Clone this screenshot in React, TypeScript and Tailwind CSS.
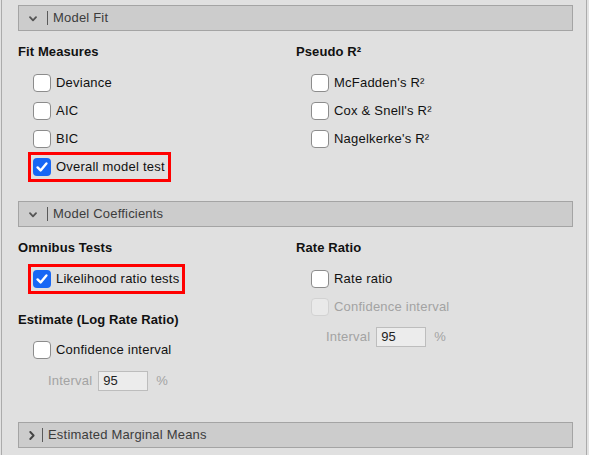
import React from 'react';

const font = { fontFamily: '"Liberation Sans", Arial, sans-serif' };

function SectionHeader({ title, open }: { title: string; open: boolean }) {
  return (
    <div className="flex h-[26px] items-center border border-[#a4a4a4] bg-[#cccccc] pl-[10px]">
      {open ? (
        <svg width="8" height="6" viewBox="0 0 8 6" className="mt-[2px]">
          <path d="M1 1.2 L4 4.4 L7 1.2" fill="none" stroke="#555" strokeWidth="1.8" strokeLinecap="round" strokeLinejoin="round" />
        </svg>
      ) : (
        <svg width="6" height="9" viewBox="0 0 6 9">
          <path d="M1.3 1 L4.6 4.5 L1.3 8" fill="none" stroke="#444" strokeWidth="1.9" strokeLinecap="round" strokeLinejoin="round" />
        </svg>
      )}
      <div className={`h-[14px] w-px bg-[#5a5a5a] ${open ? 'ml-[10px]' : 'ml-[7px]'}`} />
      <span className="ml-[5px] text-[13px] tracking-[0.2px] text-[#3c3c3c]">{title}</span>
    </div>
  );
}

function Check({
  label,
  checked = false,
  disabled = false,
  marked = false,
}: {
  label: string;
  checked?: boolean;
  disabled?: boolean;
  marked?: boolean;
}) {
  return (
    <div className="flex h-[28px] items-center pl-[15px]">
      <span
        className={`flex items-center gap-[5px] ${marked ? 'outline-[3px] outline-solid outline-[#ff0000] outline-offset-2 pr-[1px]' : ''}`}
      >
        {checked ? (
          <span className="flex h-[18px] w-[18px] items-center justify-center rounded-[4px] bg-[#1767f5]">
            <svg width="12" height="10" viewBox="0 0 12 10">
              <path d="M1.6 5.4 L4.6 8.4 L10.4 1.4" fill="none" stroke="#fff" strokeWidth="2.4" strokeLinecap="round" strokeLinejoin="round" />
            </svg>
          </span>
        ) : (
          <span
            className={`h-[18px] w-[18px] rounded-[4px] border ${
              disabled ? 'border-[#d2d2d2] bg-[#e9e9e9]' : 'border-[#8c8c8c] bg-white'
            }`}
          />
        )}
        <span className={`text-[13px] tracking-[0.22px] ${disabled ? 'text-[#a3a3a3]' : 'text-[#111]'}`}>{label}</span>
      </span>
    </div>
  );
}

function IntervalRow({ className = '' }: { className?: string }) {
  return (
    <div className={`flex h-[28px] items-center pl-[30px] ${className}`}>
      <span className="text-[13px] tracking-[0.2px] text-[#a3a3a3]">Interval</span>
      <span className="ml-[6px] flex h-[20px] w-[50px] items-center border border-[#bdbdbd] bg-[#ececec] pl-[4px] text-[13px] text-[#222]">
        95
      </span>
      <span className="ml-[8px] text-[13px] text-[#a3a3a3]">%</span>
    </div>
  );
}

function Title({ children }: { children: React.ReactNode }) {
  return <div className="h-[16px] text-[13px] font-bold leading-[16px] tracking-[0.1px] text-[#111]">{children}</div>;
}

export default function App() {
  return (
    <div className="h-[455px] w-[589px] overflow-hidden bg-[#e2e2e2]" style={font}>
      <div className="ml-[1px] h-full w-[586px] border-x border-[#ababab] bg-[#e0e0e0] pl-[16px] pr-[13px] pt-[5px]">
        <SectionHeader title="Model Fit" open />
        <div className="flex pt-[13px]">
          <div className="w-[278px]">
            <Title>Fit Measures</Title>
            <div className="mt-[9px]">
              <Check label="Deviance" />
              <Check label="AIC" />
              <Check label="BIC" />
              <Check label="Overall model test" checked marked />
            </div>
          </div>
          <div className="flex-1">
            <Title>Pseudo R²</Title>
            <div className="mt-[9px]">
              <Check label="McFadden's R²" />
              <Check label="Cox & Snell's R²" />
              <Check label="Nagelkerke's R²" />
            </div>
          </div>
        </div>

        <div className="mt-[20px]">
          <SectionHeader title="Model Coefficients" open />
        </div>
        <div className="flex pt-[13px]">
          <div className="w-[278px]">
            <Title>Omnibus Tests</Title>
            <div className="mt-[9px]">
              <Check label="Likelihood ratio tests" checked marked />
            </div>
            <div className="mt-[19px]">
              <Title>Estimate (Log Rate Ratio)</Title>
            </div>
            <div className="mt-[8px]">
              <Check label="Confidence interval" />
            </div>
            <IntervalRow className="mt-[3px]" />
          </div>
          <div className="flex-1">
            <Title>Rate Ratio</Title>
            <div className="mt-[9px]">
              <Check label="Rate ratio" />
              <Check label="Confidence interval" disabled />
            </div>
            <IntervalRow className="mt-[2px]" />
          </div>
        </div>

        <div className="mt-[27px]">
          <SectionHeader title="Estimated Marginal Means" open={false} />
        </div>
      </div>
    </div>
  );
}
